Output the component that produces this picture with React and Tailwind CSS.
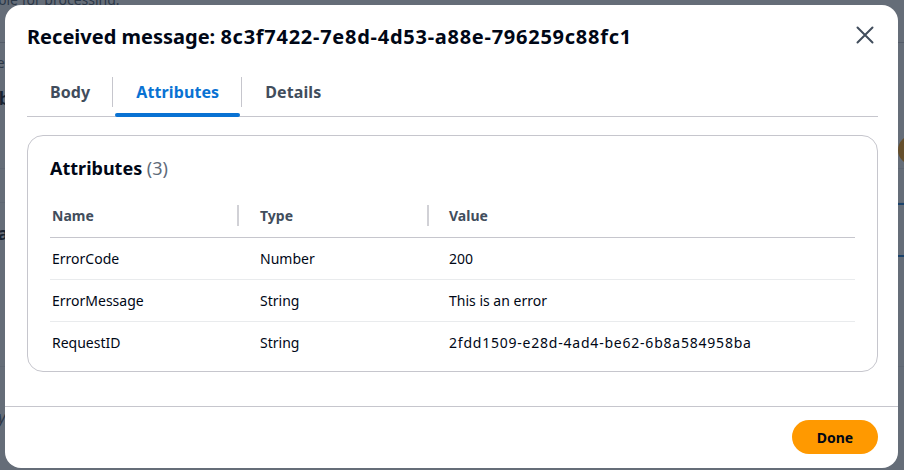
import { useState } from 'react';

const attributes = [
  { name: 'ErrorCode', type: 'Number', value: '200' },
  { name: 'ErrorMessage', type: 'String', value: 'This is an error' },
  { name: 'RequestID', type: 'String', value: '2fdd1509-e28d-4ad4-be62-6b8a584958ba', id: true },
];

const tabs = ['Body', 'Attributes', 'Details'];

// the queue page sitting behind the dialog, mostly hidden by the overlay
const QueuePage = () => (
  <div className="flex flex-col text-[14px] leading-5 text-[#414d5c]">
    <p className="-mt-[10px] ml-[-40px] whitespace-nowrap">available for processing.</p>
    <div className="h-[33px] border-b border-[#c6c6cd]" />
    <div className="flex h-[40px] items-center justify-between">
      <span className="ml-[-10px]">se</span>
    </div>
    <div className="flex h-[30px] items-center">
      <span className="ml-[-12px] text-[18px] font-bold text-[#000716]">ab</span>
    </div>
    <div className="flex h-[40px] items-start justify-end">
      <span className="mr-[-50px] mt-[22px] h-[30px] w-[56px] rounded-full bg-[#ff9900]" />
    </div>
    <div className="h-[16px] border-b border-[#e9ebed]" />
    <div className="h-[34px] border-b border-[#e9ebed]" />
    <div className="flex h-[20px] justify-end">
      <span className="mr-[-2px] h-[2px] w-[8px] bg-[#0972d3]" />
    </div>
    <div className="flex h-[20px] items-center">
      <span className="ml-[-10px] text-[18px] font-bold text-[#000716]">ta</span>
    </div>
    <div className="flex h-[14px] justify-end">
      <span className="mr-[-2px] mt-[12px] h-[2px] w-[8px] bg-[#0972d3]" />
    </div>
    <div className="h-[110px] border-b border-[#e9ebed]" />
    <div className="flex h-[60px] items-end">
      <span className="ml-[-8px] text-[16px] italic">ry</span>
    </div>
  </div>
);

const CloseIcon = () => (
  <svg width="20" height="20" viewBox="0 0 20 20" fill="none" stroke="#414d5c" strokeWidth="2" strokeLinecap="round">
    <path d="M2.5 2.5l15 15M17.5 2.5l-15 15" />
  </svg>
);

const TabBar = ({ active, onSelect }) => (
  <div className="ml-[22px] mr-[20px] mt-[21px] flex border-b border-[#c6c6cd]">
    {tabs.map((tab, i) => (
      <button key={tab} onClick={() => onSelect(tab)} className="relative flex h-[46px] flex-col justify-start pt-[7px]">
        <span
          className={`flex h-[30px] items-center pl-[23px] pr-[22px] text-[16px] font-bold tracking-[0.1px] ${
            i > 0 ? 'border-l border-[#c6c6cd]' : ''
          } ${active === tab ? 'text-[#0972d3]' : 'text-[#414d5c]'}`}
        >
          {tab}
        </span>
        {active === tab && <span className="absolute bottom-[-1px] left-[3px] right-[1px] h-[4px] rounded-full bg-[#0972d3]" />}
      </button>
    ))}
  </div>
);

const AttributesTable = () => (
  <div className="ml-[22px] mr-[20px] mt-[18px] rounded-2xl border border-[#c6c6cd] px-[22px] pb-[7px] pt-[21px]">
    <h3 className="text-[18px] leading-[22px] font-bold text-[#000716]">
      Attributes <span className="font-normal text-[#5f6b7a]">(3)</span>
    </h3>
    <div className="mt-[14px] grid grid-cols-[187px_190px_1fr] text-[14px] leading-5">
      <div className="flex h-[45px] items-center border-b border-[#c6c6cd] pl-[2px] pt-px font-bold text-[#414d5c]">Name</div>
      <div className="flex h-[45px] items-center border-b border-[#c6c6cd] font-bold text-[#414d5c]">
        <span className="h-[21px] w-[2px] bg-[#d1d1d6]" />
        <span className="ml-[21px] pt-px">Type</span>
      </div>
      <div className="flex h-[45px] items-center border-b border-[#c6c6cd] font-bold text-[#414d5c]">
        <span className="h-[21px] w-[2px] bg-[#d1d1d6]" />
        <span className="ml-[20px] pt-px">Value</span>
      </div>
      {attributes.map((attr, i) => {
        const line = i < attributes.length - 1 ? 'border-b border-[#e9ebed]' : '';
        return [
          <div key={`${attr.name}-n`} className={`h-[42px] pl-[2px] pt-[11px] text-[#000716] ${line}`}>{attr.name}</div>,
          <div key={`${attr.name}-t`} className={`h-[42px] pl-[23px] pt-[11px] text-[#000716] ${line}`}>{attr.type}</div>,
          <div key={`${attr.name}-v`} className={`h-[42px] pl-[22px] pt-[11px] text-[#000716] ${attr.id ? 'tracking-[0.78px]' : ''} ${line}`}>
            {attr.value}
          </div>,
        ];
      })}
    </div>
  </div>
);

const App = () => {
  const [activeTab, setActiveTab] = useState('Attributes');

  return (
    <div className="relative h-[470px] w-[904px] overflow-hidden bg-white font-['Noto_Sans',sans-serif]">
      <QueuePage />
      <div className="absolute inset-0 bg-[#232f3e]/70 pl-[5px] pt-[5px]">
        <div className="flex h-[463px] w-[893px] flex-col rounded-2xl bg-white">
          <div className="flex items-start justify-between pl-[22px] pr-[20px] pt-[20px]">
            <h2 className="text-[20px] leading-6 font-bold text-[#000716]">
              Received message: <span className="tracking-[0.74px]">8c3f7422-7e8d-4d53-a88e-796259c88fc1</span>
            </h2>
            <button className="mr-[3px]">
              <CloseIcon />
            </button>
          </div>
          <TabBar active={activeTab} onSelect={setActiveTab} />
          <div className="flex-1">{activeTab === 'Attributes' && <AttributesTable />}</div>
          <div className="flex justify-end border-t border-[#c6c6cd] pb-[14px] pr-[20px] pt-[13px]">
            <button className="h-[34px] w-[86px] rounded-full bg-[#ff9900] text-[14px] font-bold text-[#000716]">Done</button>
          </div>
        </div>
      </div>
    </div>
  );
};

export default App;
